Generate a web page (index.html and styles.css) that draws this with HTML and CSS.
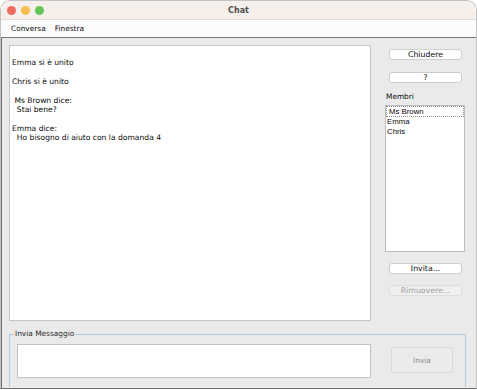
FILE: index.html
```html
<!DOCTYPE html>
<html lang="it">
<head>
    <meta charset="UTF-8">
    <title>Chat</title>
    <link rel="stylesheet" href="styles.css">
</head>
<body>
    <div class="window">
        <div class="titleBar">
            <div class="lights">
                <span class="light red"></span>
                <span class="light yellow"></span>
                <span class="light green"></span>
            </div>
            <div class="title">Chat</div>
        </div>
        <div class="menuBar">
            <span class="menuItem">Conversa</span>
            <span class="menuItem">Finestra</span>
        </div>
        <div class="content">
            <div class="mainRow">
                <div class="chatLog">
<div class="line">Emma si è unito</div>
<div class="line">&nbsp;</div>
<div class="line">Chris si è unito</div>
<div class="line">&nbsp;</div>
<div class="line">&nbsp;Ms Brown dice:</div>
<div class="line">&nbsp;&nbsp;Stai bene?</div>
<div class="line">&nbsp;</div>
<div class="line">Emma dice:</div>
<div class="line">&nbsp;&nbsp;Ho bisogno di aiuto con la domanda 4</div>
                </div>
                <div class="sidePanel">
                    <button class="sideButton first">Chiudere</button>
                    <button class="sideButton">?</button>
                    <div class="membersLabel">Membri</div>
                    <div class="membersList">
                        <div class="member selected">Ms Brown</div>
                        <div class="member">Emma</div>
                        <div class="member">Chris</div>
                    </div>
                    <button class="sideButton invite">Invita...</button>
                    <button class="sideButton disabled">Rimuovere...</button>
                </div>
            </div>
            <fieldset class="sendBox">
                <legend>Invia Messaggio</legend>
                <div class="sendRow">
                    <div class="messageInput"></div>
                    <button class="sendButton">Invia</button>
                </div>
            </fieldset>
        </div>
    </div>
</body>
</html>
```

FILE: styles.css
```css
body {
    margin: 0;
    background: #ffffff;
    font-family: "DejaVu Sans", sans-serif;
}

.window {
    width: 477px;
    height: 389px;
    box-sizing: border-box;
    border: 1px solid #c4c4c4;
    border-bottom: 1px solid #6f6f6f;
    border-radius: 10px 10px 0 0;
    overflow: hidden;
    display: flex;
    flex-direction: column;
}

/* barra del titolo */
.titleBar {
    height: 18px;
    flex: none;
    background: #f5f0ec;
    border-bottom: 1px solid #dedbd8;
    display: flex;
    align-items: center;
    position: relative;
}
.lights {
    display: flex;
    gap: 5px;
    padding-left: 6px;
}
.light {
    width: 9px;
    height: 9px;
    border-radius: 50%;
}
.red { background: #ee6a5f; }
.yellow { background: #f5bf4f; }
.green { background: #62c554; }
.title {
    position: absolute;
    left: 0;
    right: 0;
    text-align: center;
    font-weight: bold;
    font-size: 8px;
    color: #4d4d4d;
}

.menuBar {
    height: 17px;
    flex: none;
    background: #fbfbfb;
    border-bottom: 1px solid #777777;
    display: flex;
    align-items: center;
    gap: 9px;
    padding-left: 10px;
    font-size: 7.4px;
    color: #111111;
}

.content {
    flex: 1;
    background: #eaeaea;
    border-left: 1px solid #6d6d6d;
    padding: 7px 10px 0 7px;
    display: flex;
    flex-direction: column;
}

.mainRow {
    display: flex;
    gap: 14px;
}

.chatLog {
    width: 362px;
    height: 276px;
    box-sizing: border-box;
    background: #ffffff;
    border: 1px solid #c6c6c6;
    padding: 12px 2px;
    font-size: 7.6px;
    line-height: 9.4px;
    color: #0a0a0a;
}

.sidePanel {
    width: 80px;
    display: flex;
    flex-direction: column;
}
.sideButton {
    width: 73px;
    height: 11px;
    margin: 12px 0 0 4px;
    padding: 0;
    box-sizing: border-box;
    border: 1px solid #cdcdcd;
    border-radius: 3px;
    background: #ffffff;
    font-family: "DejaVu Sans", sans-serif;
    font-size: 7.8px;
    line-height: 9px;
    color: #0a0a0a;
}
.sideButton.first { margin-top: 4px; }
.sideButton.invite { margin-top: 11px; }
.sideButton.disabled {
    margin-top: 11px;
    background: #f0f0f0;
    border-color: #dddddd;
    color: #9a9a9a;
}

.membersLabel {
    margin-top: 9px;
    padding-left: 1px;
    height: 10px;
    line-height: 10px;
    font-size: 7.4px;
    color: #0a0a0a;
}
.membersList {
    margin-top: 3px;
    height: 147px;
    box-sizing: border-box;
    background: #ffffff;
    border: 1px solid #bdbdbd;
    font-family: "Liberation Sans", sans-serif;
    font-size: 7.8px;
    color: #0a0a0a;
}
.member {
    height: 10px;
    line-height: 10px;
    padding-left: 1px;
}
.member.selected {
    border: 1px dotted #8a8a8a;
    padding-left: 2px;
    height: 9px;
    line-height: 9px;
}

/* area invio messaggio */
.sendBox {
    margin: 8px 0 0 0;
    padding: 0;
    height: 58px;
    box-sizing: border-box;
    border: 1px solid #b7c8dd;
    border-bottom: none;
}
.sendBox legend {
    margin-left: 4px;
    padding: 0 1px;
    font-size: 7.4px;
    line-height: 10px;
    color: #2a2a2a;
}
.sendRow {
    display: flex;
    align-items: flex-start;
    padding: 5px 0 0 7px;
}
.messageInput {
    width: 354px;
    height: 34px;
    box-sizing: border-box;
    background: #ffffff;
    border: 1px solid #c2c2c2;
}
.sendButton {
    margin: 3px 0 0 20px;
    width: 62px;
    height: 26px;
    box-sizing: border-box;
    background: #ebebeb;
    border: 1px solid #d8d8d8;
    border-radius: 2px;
    font-family: "DejaVu Sans", sans-serif;
    font-size: 7.4px;
    color: #8c8c8c;
}
```
